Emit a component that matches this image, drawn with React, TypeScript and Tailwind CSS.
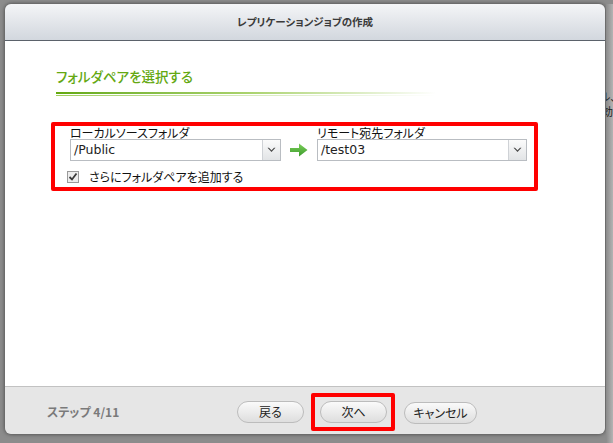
import React from "react";

const jp = "font-['Noto_Sans_CJK_JP',sans-serif] [font-feature-settings:'palt']";
const ui = "font-['DejaVu_Sans','Noto_Sans_CJK_JP',sans-serif]";

function Chevron() {
  return (
    <svg width="9" height="6" viewBox="0 0 9 6" aria-hidden>
      <path d="M0.5 0.8 L4.5 5 L8.5 0.8 L7 0.8 L4.5 3.3 L2 0.8 Z" fill="#4a4a4a" />
    </svg>
  );
}

function Select({ value, width }: { value: string; width: string }) {
  return (
    <div className={`${width} flex h-[22px] border border-[#b9bdc2] bg-white`}>
      <span className={`${ui} flex flex-1 items-center pl-[3px] text-[12.5px] text-[#222]`}>{value}</span>
      <span className="flex w-[18px] items-center justify-center border-l border-[#cfd2d6] bg-gradient-to-b from-[#fbfbfb] to-[#e2e4e6]">
        <Chevron />
      </span>
    </div>
  );
}

function PillButton({ label, width }: { label: string; width: string }) {
  return (
    <button
      className={`${jp} ${width} h-[22px] rounded-full border border-[#bcbcbc] bg-gradient-to-b from-[#fafafa] to-[#dedede] text-[12px] leading-none text-[#222]`}
    >
      {label}
    </button>
  );
}

function GreenArrow() {
  return (
    <svg width="18" height="14" viewBox="0 0 18 14" aria-hidden>
      <defs>
        <linearGradient id="ga" x1="0" y1="0" x2="0" y2="1">
          <stop offset="0" stopColor="#7ccf5a" />
          <stop offset="1" stopColor="#3c9b2c" />
        </linearGradient>
      </defs>
      <path d="M0 5 H9 V0.5 L17.5 7 L9 13.5 V9 H0 Z" fill="url(#ga)" />
    </svg>
  );
}

function CheckBox() {
  return (
    <svg width="12" height="12" viewBox="0 0 12 12" aria-hidden>
      <rect x="0.5" y="0.5" width="11" height="11" fill="#ededed" stroke="#9a9a9a" />
      <path d="M2.5 6 L5 8.5 L9.5 2.5" fill="none" stroke="#3a3a3a" strokeWidth="1.8" />
    </svg>
  );
}

export default function App() {
  return (
    <div className="flex h-[443px] w-[613px] overflow-hidden bg-[#8c8c8c] pl-[5px] pt-[4px]">
      <div className="flex h-[430px] w-[600px] flex-col overflow-hidden rounded-[6px] shadow-[0_0_4px_rgba(0,0,0,0.55)]">
        <div className="flex h-[37px] items-center justify-center border-b border-[#5b626b] bg-gradient-to-b from-[#f4f5f7] to-[#d2d7de]">
          <span className={`${jp} text-[10.5px] font-bold text-[#3a3a3a]`}>レプリケーションジョブの作成</span>
        </div>

        <div className="flex h-[345px] flex-col bg-white pl-[46px] pt-[27px]">
          <div className="pl-[5px]">
            <div className={`${jp} text-[13.5px] font-medium leading-[16px] text-[#64a812]`}>フォルダペアを選択する</div>
            <div className="mt-[8px] h-[2px] w-[380px] bg-gradient-to-r from-[#64a90d] via-[#a9d26c] to-transparent" />
            <div className="mt-[1px] h-[1px] w-[380px] bg-gradient-to-r from-[#9fcd5c] via-[#d6eabb] to-transparent" />
          </div>

          <div className="mt-[26px] flex h-[69px] w-[487px] flex-col rounded-[2px] border-4 border-[#ff0000]">
            <div className="flex pl-[15px]">
              <div className="flex w-[211px] flex-col">
                <span className={`${jp} h-[13px] text-[12px] leading-[13px] text-[#111]`}>ローカルソースフォルダ</span>
                <Select value="/Public" width="w-[211px]" />
              </div>
              <div className="flex w-[36px] items-end justify-center pb-[4px]">
                <GreenArrow />
              </div>
              <div className="flex w-[210px] flex-col">
                <span className={`${jp} h-[13px] text-[12px] leading-[13px] text-[#111]`}>リモート宛先フォルダ</span>
                <Select value="/test03" width="w-[210px]" />
              </div>
            </div>
            <div className="mt-[9px] flex items-center pl-[12px]">
              <CheckBox />
              <span className={`${jp} ml-[10px] text-[12px] leading-[14px] text-[#111]`}>さらにフォルダペアを追加する</span>
            </div>
          </div>
        </div>

        <div className="flex h-[48px] items-center border-t border-[#c2c2c2] bg-[#e6e6e6] pl-[42px] pt-[3px]">
          <span className={`${jp} text-[12px] font-bold text-[#7a7a7a]`}>ステップ 4/11</span>
          <div className="ml-auto flex items-center pr-[128px]">
            <PillButton label="戻る" width="w-[67px]" />
            <div className="ml-[7px] rounded-[2px] border-4 border-[#ff0000] pb-[4px] pl-[5px] pr-[4px] pt-[2px]">
              <PillButton label="次へ" width="w-[67px]" />
            </div>
            <div className="ml-[9px]">
              <PillButton label="キャンセル" width="w-[73px]" />
            </div>
          </div>
        </div>
      </div>

      <div className="ml-[1px] flex h-[443px] w-[7px] flex-col overflow-hidden bg-gradient-to-r from-[#8a8a8a] to-[#b4b4b4] pt-[86px]">
        <span className={`${jp} -ml-[6px] whitespace-nowrap text-[11px] leading-[13px] text-[#222]`}>ル、</span>
        <span className={`${jp} -ml-[4px] mt-[2px] whitespace-nowrap text-[11px] leading-[13px] text-[#222]`}>効</span>
      </div>
    </div>
  );
}
